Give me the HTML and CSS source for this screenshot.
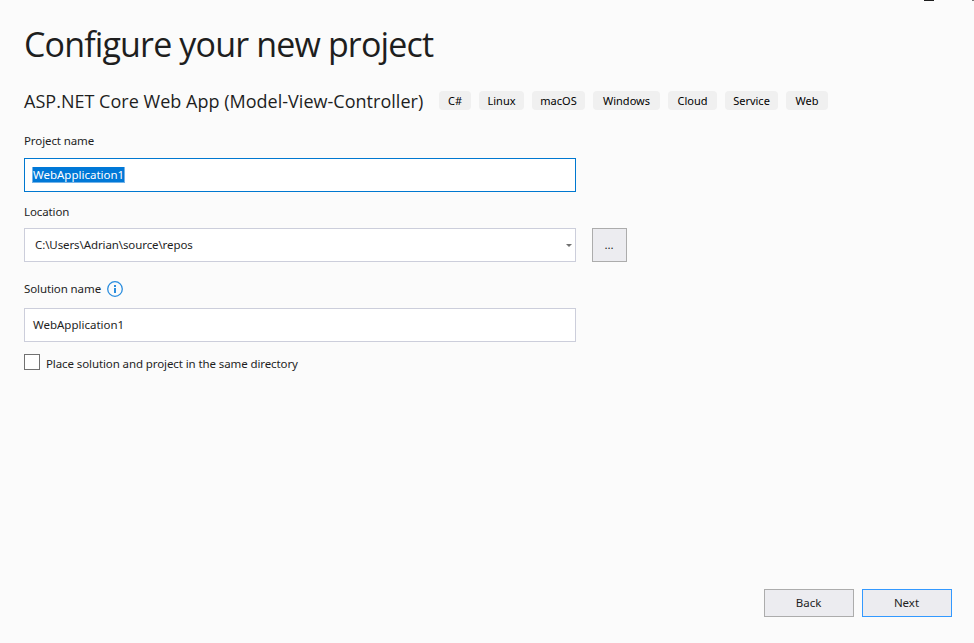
FILE: index.html
```html
<!DOCTYPE html>
<html lang="en">
<head>
<meta charset="utf-8">
<title>Configure your new project</title>
<link rel="stylesheet" href="styles.css">
</head>
<body>
<div class="caption-buttons" aria-hidden="true"><span class="minimize"></span><span class="edge"></span></div>
<main class="dialog">
  <h1 class="title">Configure your new project</h1>
  <div class="template">
    <h2 class="template-name">ASP.NET Core Web App (Model-View-Controller)</h2>
    <ul class="tags">
      <li class="tag csharp">C#</li>
      <li class="tag linux">Linux</li>
      <li class="tag macos">macOS</li>
      <li class="tag windows">Windows</li>
      <li class="tag cloud">Cloud</li>
      <li class="tag service">Service</li>
      <li class="tag web">Web</li>
    </ul>
  </div>
  <form class="form">
    <div class="label project-label">Project name</div>
    <div class="field focused"><span class="selection">WebApplication1</span></div>
    <div class="label location-label">Location</div>
    <div class="location-row">
      <div class="field combo"><span class="path">C:\Users\Adrian\source\repos</span>
        <svg class="arrow" width="6" height="3" viewBox="0 0 6 3"><path d="M0 0h6L3 3z" fill="#717171"/></svg>
      </div>
      <button type="button" class="button browse">...</button>
    </div>
    <div class="label solution-label"><span class="solution-text">Solution name</span>
      <svg class="info" width="16" height="16" viewBox="0 0 16 16"><circle cx="8" cy="8" r="7.3" fill="none" stroke="#2a8dde" stroke-width="1.3"/><path d="M7 4h2v2H7zM7 7h2v5H7z" fill="#2a8dde"/></svg>
    </div>
    <div class="field"><span>WebApplication1</span></div>
    <div class="check-row"><span class="checkbox"></span><span class="check-label">Place solution and project in the same directory</span></div>
  </form>
  <footer class="footer">
    <button type="button" class="button">Back</button>
    <button type="button" class="button primary">Next</button>
  </footer>
</main>
</body>
</html>
```
FILE: styles.css
```css
* { box-sizing: border-box; }
body {
  margin: 0;
  height: 643px;
  overflow: hidden;
  background: #fbfbfb;
  color: #1e1e1e;
  font: 400 11.5px/16px "Noto Sans", "Open Sans", sans-serif;
  letter-spacing: -0.1px;
}
.caption-buttons {
  position: absolute;
  top: 0;
  right: 0;
  display: flex;
  gap: 38px;
}
.minimize { width: 10px; height: 1px; background: #1e1e1e; }
.edge { width: 2px; height: 1px; background: #777; }
.dialog {
  height: 643px;
  padding: 20px 22px 26px 24px;
  display: flex;
  flex-direction: column;
}
.title {
  margin: 0;
  font: 400 34px/48px "Open Sans", sans-serif;
  letter-spacing: -0.85px;
  white-space: nowrap;
}
.template { display: flex; align-items: flex-start; margin-top: 20px; height: 26px; }
.template-name {
  margin: 0;
  width: 415px;
  font: 400 18px/26px "Open Sans", sans-serif;
  letter-spacing: 0.02px;
  white-space: nowrap;
}
.tags { display: flex; gap: 8px; list-style: none; margin: 3px 0 0; padding: 0; }
.tag {
  height: 19px;
  line-height: 19px;
  border-radius: 4px;
  background: #f0f0f0;
  color: #000;
  text-align: center;
  font-size: 11px;
  letter-spacing: 0;
}
.csharp { width: 32px; }
.linux { width: 45px; }
.macos { width: 53px; }
.windows { width: 67px; }
.cloud { width: 49px; }
.service { width: 53px; }
.web { width: 42px; }
.label { height: 16px; }
.project-label { margin: 19px 0 9px; }
.location-label { margin: 12px 0 8px; }
.solution-label { display: flex; align-items: center; margin: 19px 0 11px; }
.solution-text { width: 83px; }
.field {
  width: 552px;
  height: 34px;
  padding: 0 8px;
  display: flex;
  align-items: center;
  background: #fff;
  border: 1px solid #cccedb;
  letter-spacing: 0;
}
.focused { border-color: #0078d0; padding-left: 7px; }
.selection { background: #0078d7; color: #fff; border: solid #74b3e8; border-width: 0 1px 1px; width: 93px; height: 16px; line-height: 15px; }
.location-row { display: flex; gap: 16px; }
.combo { justify-content: space-between; padding: 0 3px 0 10px; }
.path { letter-spacing: -0.1px; }
.button {
  width: 90px;
  height: 28px;
  padding: 0 1px 0 0;
  border: 1px solid #acacac;
  background: #ececf0;
  color: #1e1e1e;
  font: inherit;
  letter-spacing: 0;
}
.browse { width: 35px; height: 34px; }
.primary { border-color: #3399ff; }
.check-row { display: flex; gap: 6px; margin-top: 12px; }
.checkbox { width: 16px; height: 16px; border: 1px solid #717171; background: #fff; }
.check-label { margin-top: 2px; }
.footer { display: flex; justify-content: flex-end; gap: 8px; margin-top: auto; }
```
